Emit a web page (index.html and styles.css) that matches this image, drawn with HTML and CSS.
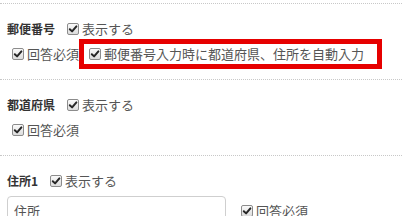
FILE: index.html
```html
<!DOCTYPE html>
<html lang="ja">
<head>
<meta charset="utf-8">
<link rel="stylesheet" href="styles.css">
</head>
<body>
<div class="page">
  <section class="field">
    <div class="head">
      <span class="name">郵便番号</span>
      <label class="chk"><span class="box"><svg viewBox="0 0 10 10"><path d="M1.8 5.2 L4.1 7.4 L8.4 2.4"/></svg></span>表示する</label>
    </div>
    <div class="opts">
      <label class="chk"><span class="box"><svg viewBox="0 0 10 10"><path d="M1.8 5.2 L4.1 7.4 L8.4 2.4"/></svg></span>回答必須</label>
      <label class="chk mark"><span class="box"><svg viewBox="0 0 10 10"><path d="M1.8 5.2 L4.1 7.4 L8.4 2.4"/></svg></span>郵便番号入力時に都道府県、住所を自動入力</label>
    </div>
  </section>
  <section class="field">
    <div class="head">
      <span class="name">都道府県</span>
      <label class="chk"><span class="box"><svg viewBox="0 0 10 10"><path d="M1.8 5.2 L4.1 7.4 L8.4 2.4"/></svg></span>表示する</label>
    </div>
    <div class="opts">
      <label class="chk"><span class="box"><svg viewBox="0 0 10 10"><path d="M1.8 5.2 L4.1 7.4 L8.4 2.4"/></svg></span>回答必須</label>
    </div>
  </section>
  <section class="field">
    <div class="head">
      <span class="name">住所1</span>
      <label class="chk"><span class="box"><svg viewBox="0 0 10 10"><path d="M1.8 5.2 L4.1 7.4 L8.4 2.4"/></svg></span>表示する</label>
    </div>
    <div class="opts wide">
      <div class="input">住所</div>
      <label class="chk"><span class="box"><svg viewBox="0 0 10 10"><path d="M1.8 5.2 L4.1 7.4 L8.4 2.4"/></svg></span>回答必須</label>
    </div>
  </section>
</div>
</body>
</html>
```

FILE: styles.css
```css
html, body {
  margin: 0;
  padding: 0;
  background: #fff;
}

body {
  font-family: "Noto Sans CJK JP", "Noto Sans", sans-serif;
  font-size: 13px;
  color: #555;
  overflow: hidden;
}

.page {
  padding-top: 3px;
}

.field {
  border-top: 1px dotted #c8c8c8;
  padding: 15px 7px 15px;
}

.head,
.opts {
  display: flex;
  align-items: center;
  height: 20px;
  line-height: 20px;
}

.opts {
  margin-top: 5px;
  padding-left: 5px;
}

.opts.wide {
  padding-left: 0;
  height: 30px;
  gap: 15px;
}

.name {
  font-size: 12px;
  font-weight: bold;
  color: #333;
  margin-right: 12px;
}

.chk {
  display: inline-flex;
  align-items: center;
  gap: 3px;
  white-space: nowrap;
}

.box {
  display: inline-block;
  box-sizing: border-box;
  width: 12px;
  height: 12px;
  border: 1px solid #8c8c8c;
  border-radius: 2px;
  background: linear-gradient(#fafafa, #dcdcdc);
}

.box svg {
  display: block;
  width: 10px;
  height: 10px;
}

.box path {
  fill: none;
  stroke: #262626;
  stroke-width: 2;
  stroke-linecap: round;
  stroke-linejoin: round;
}

.mark {
  margin-left: 5px;
  padding: 0 13px 0 5px;
  outline: 5px solid #e60000;
}

.input {
  box-sizing: border-box;
  width: 219px;
  height: 30px;
  line-height: 28px;
  border: 1px solid #cfcfcf;
  border-radius: 4px;
  padding-left: 6px;
  color: #555;
}
```
